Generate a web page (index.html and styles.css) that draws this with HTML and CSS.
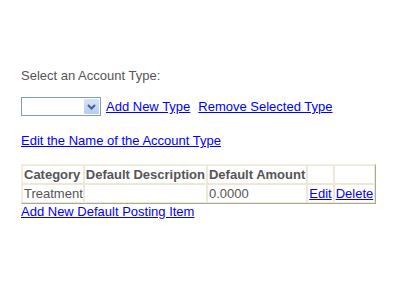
FILE: index.html
```html
<!DOCTYPE html>
<html lang="en">
<head>
    <meta charset="UTF-8">
    <title>Account Types</title>
    <link rel="stylesheet" href="styles.css">
</head>
<body>
    <div class="page">
        <p class="label">Select an Account Type:</p>

        <div class="type-row">
            <div class="select-box">
                <span class="select-value"></span>
                <span class="select-btn">
                    <svg width="9" height="6" viewBox="0 0 9 6">
                        <path d="M1 1 L4.5 4.5 L8 1" fill="none" stroke="#4d6185" stroke-width="2"/>
                    </svg>
                </span>
            </div>
            <a href="#">Add New Type</a>
            <a href="#">Remove Selected Type</a>
        </div>

        <p class="edit-name"><a href="#">Edit the Name of the Account Type</a></p>

        <table class="items">
            <tr>
                <th>Category</th>
                <th>Default Description</th>
                <th>Default Amount</th>
                <th></th>
                <th></th>
            </tr>
            <tr>
                <td>Treatment</td>
                <td></td>
                <td>0.0000</td>
                <td><a href="#">Edit</a></td>
                <td><a href="#">Delete</a></td>
            </tr>
        </table>
        <a href="#">Add New Default Posting Item</a>
    </div>
</body>
</html>
```

FILE: styles.css
```css
body {
    margin: 0;
    font-family: Arial, "Liberation Sans", sans-serif;
    font-size: 13px;
    color: #555;
}

.page {
    padding: 68px 21px 0 21px;
}

a {
    color: #0000ff;
}

.label {
    margin: 0 0 14px 0;
}

.type-row {
    display: flex;
    align-items: center;
    gap: 5px;
}

.type-row a + a {
    margin-left: 3px;
}

.select-box {
    width: 78px;
    height: 17px;
    border: 1px solid #7f9db9;
    display: flex;
    justify-content: flex-end;
    background: #fff;
}

.select-btn {
    width: 15px;
    height: 15px;
    margin: 1px;
    background: linear-gradient(#d6e3fd, #b6cbf6);
    border-radius: 1px;
    display: flex;
    align-items: center;
    justify-content: center;
}

.edit-name {
    margin: 17px 0 16px 0;
}

.items {
    border-collapse: separate;
    border-spacing: 0;
    border: 1px solid;
    border-color: #f1efe2 #aca899 #aca899 #f1efe2;
}

.items th,
.items td {
    border: 1px solid #ece9d8;
    padding: 0 1px;
    height: 17px;
    text-align: left;
    white-space: nowrap;
}

.items th:first-child,
.items td:first-child {
    padding: 0 0 0 1px;
}

.items th {
    font-weight: bold;
}
```
